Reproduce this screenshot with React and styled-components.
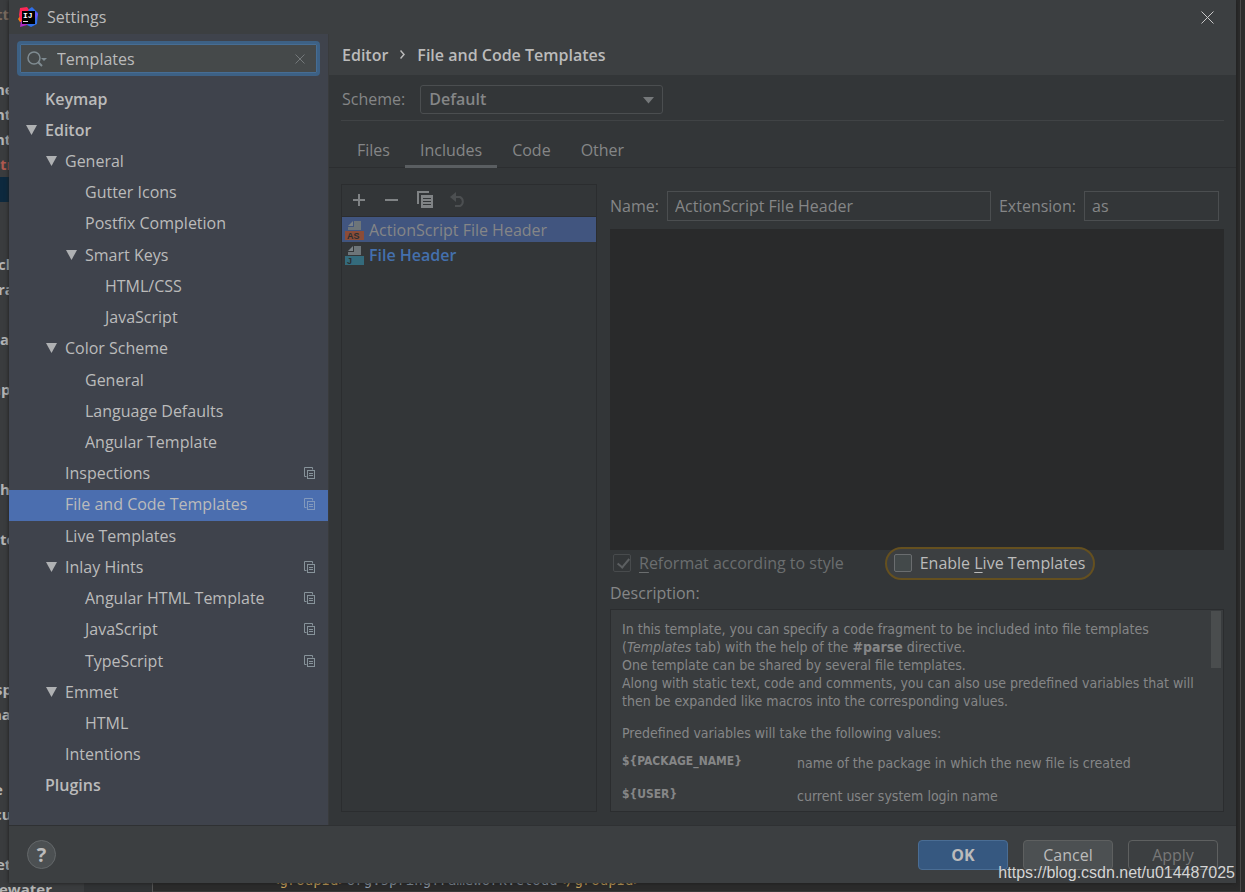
import React, { useState } from 'react';
import styled, { createGlobalStyle } from 'styled-components';

const TREE = [
    { label: "Keymap", level: 0, bold: true },
    { label: "Editor", level: 0, bold: true, open: true },
    { label: "General", level: 1, open: true },
    { label: "Gutter Icons", level: 2 },
    { label: "Postfix Completion", level: 2 },
    { label: "Smart Keys", level: 2, open: true },
    { label: "HTML/CSS", level: 3 },
    { label: "JavaScript", level: 3 },
    { label: "Color Scheme", level: 1, open: true },
    { label: "General", level: 2 },
    { label: "Language Defaults", level: 2 },
    { label: "Angular Template", level: 2 },
    { label: "Inspections", level: 1, project: true },
    { label: "File and Code Templates", level: 1, project: true, selected: true },
    { label: "Live Templates", level: 1 },
    { label: "Inlay Hints", level: 1, open: true, project: true },
    { label: "Angular HTML Template", level: 2, project: true },
    { label: "JavaScript", level: 2, project: true },
    { label: "TypeScript", level: 2, project: true },
    { label: "Emmet", level: 1, open: true },
    { label: "HTML", level: 2 },
    { label: "Intentions", level: 1 },
    { label: "Plugins", level: 0, bold: true },
];

// project pane rows of the IDE window behind the dialog
const PROJECT_ROWS = [
    { text: "tt", color: "#7a6a5f", shift: 4 }, {}, {},
    { text: "ne", shift: 5 }, { text: "nt", shift: 5 }, { text: "nt", shift: 5 },
    { text: "tr", color: "#b0594f" }, { active: true }, {}, {},
    { text: "cl", shift: 2 }, { text: "ra", shift: 2 }, {}, { text: "a" }, {},
    { text: "ap", shift: 8 }, {}, {}, {}, { text: "h" }, {},
    { text: "te" }, {}, {}, {}, {}, {},
    { text: "sp", shift: 5 }, { text: "na", shift: 8 }, {}, {},
    { text: "e", shift: 6 }, { text: "cu", shift: 6 }, {}, { text: "et", shift: 4 },
    { text: "ewater", shift: 1 },
];

const VARIABLES = [
    { name: "${PACKAGE_NAME}", text: "name of the package in which the new file is created" },
    { name: "${USER}", text: "current user system login name" },
];

const IdeaLogo = () => (
    <svg width="20" height="20" viewBox="0 0 20 20" aria-hidden="true">
        <path d="M0 12 2 9 6 16 2 15Z" fill="#f97a12" />
        <path d="M2 1 9 0 12 4 6 17 2 12 1 8Z" fill="#fe2857" />
        <path d="M11 2 14 0 20 6 19 17 13 20 9 18 10 4Z" fill="#2f6fe8" />
        <path d="M15 3 20 7 18 13Z" fill="#6b57ff" />
        <path d="M3 14 10 16 9 18 2 20Z" fill="#b02bc4" />
        <rect x="4" y="4" width="13" height="13" fill="#000" />
        <text x="5" y="11" fill="#fff" fontFamily="Liberation Mono" fontWeight="700" fontSize="8">IJ</text>
        <rect x="5" y="14" width="5" height="1" fill="#ddd" />
    </svg>
);

const ProjectIcon = () => (
    <svg width="11" height="12" viewBox="0 0 11 12" aria-hidden="true" fill="none" stroke="currentColor">
        <path d="M2.500 9.500H0.500V0.500H8.500V2.500" />
        <rect x="3.500" y="3.500" width="7" height="8" />
        <path d="M5 6.500H9M5 8.500H9" />
    </svg>
);

const CopyIcon = () => (
    <svg width="16" height="17" viewBox="0 0 16 17" aria-hidden="true">
        <path d="M0 0H12V2H2V13H0Z" fill="currentColor" />
        <path fillRule="evenodd" d="M4 4H16V17H4ZM6 7V8H14V7ZM6 10V11H14V10ZM6 13V14H14V13Z" fill="currentColor" />
    </svg>
);

const FileIcon = ({ tag, color }) => (
    <svg width="20" height="20" viewBox="0 0 20 20" aria-hidden="true">
        <path d="M8 1V6H3Z" fill="#7a8287" />
        <path d="M9 1H16V10H3V7H9Z" fill="#6d7579" />
        <rect x="0" y="11" width="19" height="9" fill={color} />
        <text x="2" y="19" fill="#2b2f31" fontFamily="Liberation Sans" fontWeight="700" fontSize="9">{tag}</text>
    </svg>
);

export default function App() {
    const [query, setQuery] = useState("Templates");
    const [name, setName] = useState("ActionScript File Header");
    const [extension, setExtension] = useState("as");
    const [live, setLive] = useState(false);

    return (
        <Desktop>
            <GlobalStyle />
            <Ide aria-hidden="true">
                <ProjectPane>
                    {PROJECT_ROWS.map((row, i) => (
                        <ProjectRow key={i} $color={row.color} $shift={row.shift} $active={row.active}>
                            {row.text}
                        </ProjectRow>
                    ))}
                </ProjectPane>
                <Gutter />
                <CodePane>
                    <CodeLine>
                        <b>&lt;groupId&gt;</b>org.springframework.cloud<b>&lt;/groupId&gt;</b>
                    </CodeLine>
                </CodePane>
            </Ide>

            <Dialog role="dialog" aria-label="Settings">
                <TitleBar>
                    <IdeaLogo />
                    <Title>Settings</Title>
                    <CloseButton aria-label="Close">
                        <svg width="13" height="13" viewBox="0 0 13 13" fill="none" stroke="currentColor">
                            <path d="M0.500 0.500 12.500 12.500M12.500 0.500 0.500 12.500" />
                        </svg>
                    </CloseButton>
                </TitleBar>

                <Body>
                    <Sidebar>
                        <SearchBox>
                            <svg width="21" height="16" viewBox="0 0 21 16" fill="none" aria-hidden="true">
                                <circle cx="7" cy="7" r="6" stroke="#7f8b91" strokeWidth="1.500" />
                                <path d="M11 11 15 15" stroke="#7f8b91" strokeWidth="2" />
                                <path d="M14 7H20L17 10Z" fill="#7f8b91" />
                            </svg>
                            <SearchInput
                                type="text"
                                aria-label="Search settings"
                                value={query}
                                onChange={(e) => setQuery(e.target.value)}
                            />
                            <ClearButton aria-label="Clear" onClick={() => setQuery("")}>
                                <svg width="10" height="10" viewBox="0 0 10 10" fill="none" stroke="currentColor">
                                    <path d="M0.500 0.500 9.500 9.500M9.500 0.500 0.500 9.500" />
                                </svg>
                            </ClearButton>
                        </SearchBox>
                        <Tree>
                            {TREE.map((node, i) => (
                                <TreeRow key={i} $level={node.level} $bold={node.bold} $selected={node.selected}>
                                    <Twisty>
                                        {node.open && (
                                            <svg width="11" height="10" viewBox="0 0 11 10" aria-hidden="true">
                                                <path d="M0 0H11L5.500 10Z" fill="#afb1b3" />
                                            </svg>
                                        )}
                                    </Twisty>
                                    <TreeLabel>{node.label}</TreeLabel>
                                    {node.project && <ProjectIcon />}
                                </TreeRow>
                            ))}
                        </Tree>
                    </Sidebar>

                    <Main>
                        <Breadcrumb>
                            <span>Editor</span>
                            <svg width="5" height="9" viewBox="0 0 5 9" fill="none" stroke="#bbb" strokeWidth="1.500" aria-hidden="true">
                                <path d="M0.500 0.500 4 4.500 0.500 8.500" />
                            </svg>
                            <span>File and Code Templates</span>
                        </Breadcrumb>
                        <SchemeRow>
                            <label htmlFor="scheme">Scheme:</label>
                            <SelectWrap>
                                <Select id="scheme">
                                    <option>Default</option>
                                    <option>Project</option>
                                </Select>
                                <svg width="11" height="7" viewBox="0 0 11 7" aria-hidden="true">
                                    <path d="M0 0H11L5.500 6.500Z" fill="#75787a" />
                                </svg>
                            </SelectWrap>
                        </SchemeRow>
                        <Tabs role="tablist">
                            {["Files", "Includes", "Code", "Other"].map((tab) => (
                                <Tab key={tab} role="tab" $active={tab === "Includes"}>{tab}</Tab>
                            ))}
                        </Tabs>

                        <Panels>
                            <ListPanel>
                                <Toolbar>
                                    <ToolButton aria-label="Create template">
                                        <svg width="14" height="14" viewBox="0 0 14 14" stroke="currentColor" strokeWidth="2">
                                            <path d="M7 1V13M1 7H13" />
                                        </svg>
                                    </ToolButton>
                                    <ToolButton aria-label="Remove template">
                                        <svg width="14" height="14" viewBox="0 0 14 14" stroke="currentColor" strokeWidth="2">
                                            <path d="M0 7H13" />
                                        </svg>
                                    </ToolButton>
                                    <ToolButton aria-label="Copy template"><CopyIcon /></ToolButton>
                                    <ToolButton aria-label="Reset to default" disabled>
                                        <svg width="16" height="16" viewBox="0 0 16 16" fill="none">
                                            <path d="M4 5H10A5 5 0 0 1 10 14H5" stroke="currentColor" strokeWidth="2" />
                                            <path d="M0 5 6 0V10Z" fill="currentColor" />
                                        </svg>
                                    </ToolButton>
                                </Toolbar>
                                <FileRow $selected>
                                    <FileIcon tag="AS" color="#8b4c38" />
                                    ActionScript File Header
                                </FileRow>
                                <FileRow $modified>
                                    <FileIcon tag="J" color="#346b7c" />
                                    File Header
                                </FileRow>
                            </ListPanel>

                            <Details>
                                <NameRow>
                                    <label htmlFor="name">Name:</label>
                                    <Field id="name" type="text" value={name} onChange={(e) => setName(e.target.value)} />
                                    <label htmlFor="extension">Extension:</label>
                                    <Field
                                        id="extension"
                                        type="text"
                                        $width="135px"
                                        value={extension}
                                        onChange={(e) => setExtension(e.target.value)}
                                    />
                                </NameRow>
                                <Editor aria-label="Template text" />
                                <OptionsRow>
                                    <Option $disabled>
                                        <CheckBox type="checkbox" defaultChecked disabled />
                                        <span><u>R</u>eformat according to style</span>
                                    </Option>
                                    <Spotlight>
                                        <CheckBox type="checkbox" checked={live} onChange={() => setLive(!live)} />
                                        <span>Enable <u>L</u>ive Templates</span>
                                    </Spotlight>
                                </OptionsRow>
                                <DescriptionTitle>Description:</DescriptionTitle>
                                <Description>
                                    <DescriptionText>
                                        <p>
                                            In this template, you can specify a code fragment to be included into file templates
                                            (<i>Templates</i> tab) with the help of the <b>#parse</b> directive.<br />
                                            One template can be shared by several file templates.<br />
                                            Along with static text, code and comments, you can also use predefined variables that will
                                            then be expanded like macros into the corresponding values.
                                        </p>
                                        <p>Predefined variables will take the following values:</p>
                                        <Variables>
                                            <tbody>
                                                {VARIABLES.map((v) => (
                                                    <tr key={v.name}>
                                                        <th scope="row">{v.name}</th>
                                                        <td>{v.text}</td>
                                                    </tr>
                                                ))}
                                            </tbody>
                                        </Variables>
                                    </DescriptionText>
                                    <ScrollThumb />
                                </Description>
                            </Details>
                        </Panels>
                    </Main>
                </Body>

                <Footer>
                    <HelpButton aria-label="Help">?</HelpButton>
                    <Button $primary>OK</Button>
                    <Button>Cancel</Button>
                    <Button disabled>Apply</Button>
                </Footer>
            </Dialog>
            <Watermark>https://blog.csdn.net/u014487025</Watermark>
        </Desktop>
    );
}

const GlobalStyle = createGlobalStyle`
    *{
        box-sizing: border-box;
    }
    body{
        margin: 0;
        background: #2b2b2b;
        color: #bbb;
        font: 16px/20px "Open Sans", "Noto Sans", sans-serif;
    }
    button, input, select, textarea{
        margin: 0;
        font: inherit;
        color: inherit;
        outline: none;
    }
`;

const Desktop = styled.div`
    position: relative;
    display: flex;
    min-height: 100vh;
    padding: 0 9px 9px;
    overflow: hidden;
`;

const Ide = styled.div`
    position: absolute;
    inset: 0;
    display: flex;
    overflow: hidden;
    background: #2b2b2b;
`;

const ProjectPane = styled.div`
    width: 84px;
    padding-top: 2px;
    background: #3a3c3e;
`;

const ProjectRow = styled.div`
    height: 25px;
    margin-left: ${props => -(props.$shift || 0)}px;
    font-size: 15px;
    font-weight: 700;
    line-height: 25px;
    color: ${props => props.$color || "#b4b4b4"};
    background: ${props => props.$active ? "#0d293e" : "none"};
`;

const Gutter = styled.div`
    width: 69px;
    border-right: 1px solid #555;
    background: #313335;
`;

const CodePane = styled.div`
    flex: 1;
    display: flex;
    align-items: flex-end;
    margin-right: 4px;
    padding: 0 0 1px 118px;
    border-right: 1px solid #4a4a4a;
    border-bottom: 1px solid #3a3a3a;
`;

const CodeLine = styled.div`
    font: 14px/20px "DejaVu Sans Mono", monospace;
    color: #8c9aa8;
    b{
        font-weight: 400;
        color: #c9a35a;
    }
`;

const Dialog = styled.div`
    position: relative;
    flex: 1;
    display: flex;
    flex-direction: column;
    min-width: 0;
    background: #3c3f41;
    box-shadow: 0 0 4px #1c1c1c;
`;

const TitleBar = styled.div`
    display: flex;
    align-items: center;
    gap: 9px;
    height: 34px;
    padding: 0 22px 0 9px;
`;

const Title = styled.div`
    flex: 1;
`;

const CloseButton = styled.button`
    display: flex;
    padding: 0;
    border: none;
    background: none;
    color: #c8c8c8;
`;

const Body = styled.div`
    flex: 1;
    display: grid;
    grid-template-columns: 319px 1fr;
    border-bottom: 1px solid #2f3133;
`;

const Sidebar = styled.div`
    display: flex;
    flex-direction: column;
    padding: 7px 0 23px;
    background: #3f434c;
`;

const SearchBox = styled.div`
    display: flex;
    align-items: center;
    height: 35px;
    margin: 0 8px 8px;
    padding: 0 12px 0 7px;
    border: 3px solid #3d6185;
    border-radius: 4px;
    background: #45494a;
    box-shadow: inset 0 0 0 1px #466d94;
`;

const SearchInput = styled.input`
    flex: 1;
    min-width: 0;
    padding: 0 0 0 9px;
    border: none;
    background: none;
`;

const ClearButton = styled(CloseButton)`
    color: #73787a;
`;

const Tree = styled.ul`
    flex: 1;
    display: grid;
    grid-auto-rows: 1fr;
    margin: 0;
    padding: 0;
    list-style: none;
`;

const TreeRow = styled.li`
    display: flex;
    align-items: center;
    min-height: 28px;
    padding: 0 13px 2px ${props => 17 + props.$level * 20}px;
    font-weight: ${props => props.$bold ? 600 : 400};
    background: ${props => props.$selected ? "#4b6eaf" : "none"};
    > svg{
        color: ${props => props.$selected ? "#8299bd" : "#87939a"};
    }
`;

const Twisty = styled.span`
    width: 19px;
    svg{
        display: block;
    }
`;

const TreeLabel = styled.span`
    flex: 1;
`;

const Main = styled.div`
    display: flex;
    flex-direction: column;
    min-width: 0;
    border-left: 1px solid #393b3d;
    background: #333638;
    color: #858687;
`;

const Breadcrumb = styled.div`
    display: flex;
    align-items: center;
    gap: 12px;
    height: 41px;
    padding: 0 13px;
    background: #3c3f41;
    color: #bbb;
    font-weight: 600;
`;

const SchemeRow = styled.div`
    display: flex;
    align-items: center;
    gap: 15px;
    height: 46px;
    margin: 0 12px;
    padding: 3px 0 0 1px;
    border-bottom: 1px solid #404345;
`;

const SelectWrap = styled.div`
    position: relative;
    svg{
        position: absolute;
        top: 12px;
        right: 9px;
        pointer-events: none;
    }
`;

const Select = styled.select`
    width: 243px;
    height: 29px;
    padding: 0 8px;
    appearance: none;
    border: 1px solid #4b4e50;
    border-radius: 3px;
    background: #333638;
    font-weight: 600;
`;

const Tabs = styled.div`
    display: flex;
    height: 47px;
    padding: 12px 13px 0;
    border-bottom: 1px solid #2c2e30;
`;

const Tab = styled.button`
    height: 35px;
    padding: 2px 15px 0;
    border: none;
    border-bottom: 3px solid ${props => props.$active ? "#5a5e61" : "transparent"};
    background: none;
`;

const Panels = styled.div`
    flex: 1;
    display: grid;
    grid-template-columns: 256px 1fr;
    gap: 13px;
    padding: 16px 12px 13px;
`;

const ListPanel = styled.div`
    border: 1px solid #2b2d2f;
`;

const Toolbar = styled.div`
    display: flex;
    align-items: center;
    gap: 17px;
    height: 32px;
    padding: 0 9px 2px;
    border-bottom: 1px solid #2b2d2f;
`;

const ToolButton = styled.button`
    display: flex;
    justify-content: center;
    width: 16px;
    padding: 0;
    border: none;
    background: none;
    color: #808385;
    &:disabled{
        color: #4c4f51;
    }
`;

const FileRow = styled.div`
    display: flex;
    align-items: center;
    gap: 4px;
    height: 25px;
    padding-left: 3px;
    background: ${props => props.$selected ? "#41557f" : "none"};
    color: ${props => props.$modified ? "#4470ad" : "inherit"};
    font-weight: ${props => props.$modified ? 600 : 400};
`;

const Details = styled.div`
    display: flex;
    flex-direction: column;
    min-width: 0;
`;

const NameRow = styled.div`
    display: flex;
    align-items: center;
    gap: 8px;
    padding: 7px 5px 8px 0;
`;

const Field = styled.input`
    flex: ${props => props.$width ? "none" : 1};
    width: ${props => props.$width || "auto"};
    min-width: 0;
    height: 30px;
    padding: 0 7px;
    border: 1px solid #4b4e50;
    background: #333638;
`;

const Editor = styled.textarea`
    flex: 1;
    min-height: 160px;
    padding: 8px;
    border: none;
    resize: none;
    background: #292a2b;
`;

const OptionsRow = styled.div`
    display: flex;
    align-items: center;
    gap: 41px;
    height: 26px;
    padding-left: 3px;
`;

const Option = styled.label`
    display: flex;
    align-items: center;
    gap: 8px;
    color: ${props => props.$disabled ? "#6b6e6f" : "#bbb"};
    u{
        text-underline-offset: 3px;
    }
`;

const Spotlight = styled(Option)`
    flex: none;
    height: 33px;
    padding: 0 8px 0 7px;
    border: 2px solid #65501f;
    border-radius: 17px;
    background: #3c3f41;
`;

const CheckBox = styled.input`
    flex: none;
    width: 18px;
    height: 18px;
    appearance: none;
    border: 1px solid #6a6d6f;
    border-radius: 2px;
    background: #43494a;
    &:checked::after{
        content: "";
        display: block;
        width: 5px;
        height: 10px;
        margin: 1px 0 0 6px;
        border: solid #5c5f61;
        border-width: 0 2px 2px 0;
        transform: rotate(40deg);
    }
    &:disabled{
        border-color: #484b4d;
        background: none;
    }
`;

const DescriptionTitle = styled.div`
    padding: 7px 0 6px;
`;

const Description = styled.div`
    position: relative;
    height: 203px;
    border: 1px solid #2b2d2f;
    background: #393c3e;
    overflow: hidden;
`;

const DescriptionText = styled.div`
    padding: 10px 24px 0 11px;
    font: 14px/18px "DejaVu Sans Condensed", "DejaVu Sans", sans-serif;
    color: #858687;
    p{
        margin: 0 0 14px;
    }
    p + p{
        margin-bottom: 12px;
    }
`;

const Variables = styled.table`
    border-collapse: collapse;
    th{
        width: 175px;
        padding: 0 0 15px;
        font-size: 12px;
        line-height: 14px;
        text-align: left;
        vertical-align: top;
    }
    td{
        padding: 0 0 15px;
    }
`;

const ScrollThumb = styled.div`
    position: absolute;
    top: 1px;
    right: 2px;
    width: 10px;
    height: 57px;
    background: #4a4d4e;
`;

const Footer = styled.div`
    display: flex;
    align-items: center;
    gap: 15px;
    height: 57px;
    padding: 0 18px;
`;

const HelpButton = styled.button`
    width: 29px;
    height: 29px;
    margin-right: auto;
    padding: 0;
    border: 1px solid #64686a;
    border-radius: 50%;
    background: #4c5052;
    font-size: 20px;
    font-weight: 700;
`;

const Button = styled.button`
    width: 90px;
    height: 30px;
    padding: 0;
    border: 1px solid ${props => props.$primary ? "#4a6d94" : "#5e6060"};
    border-radius: 4px;
    background: ${props => props.$primary ? "#365880" : "#4c5052"};
    font-weight: ${props => props.$primary ? 700 : 400};
    &:disabled{
        background: none;
        color: #777;
    }
`;

const Watermark = styled.div`
    position: absolute;
    right: 10px;
    bottom: 9px;
    font: 16px/20px "Liberation Sans", Arial, sans-serif;
    color: #d4d4d4;
`;
